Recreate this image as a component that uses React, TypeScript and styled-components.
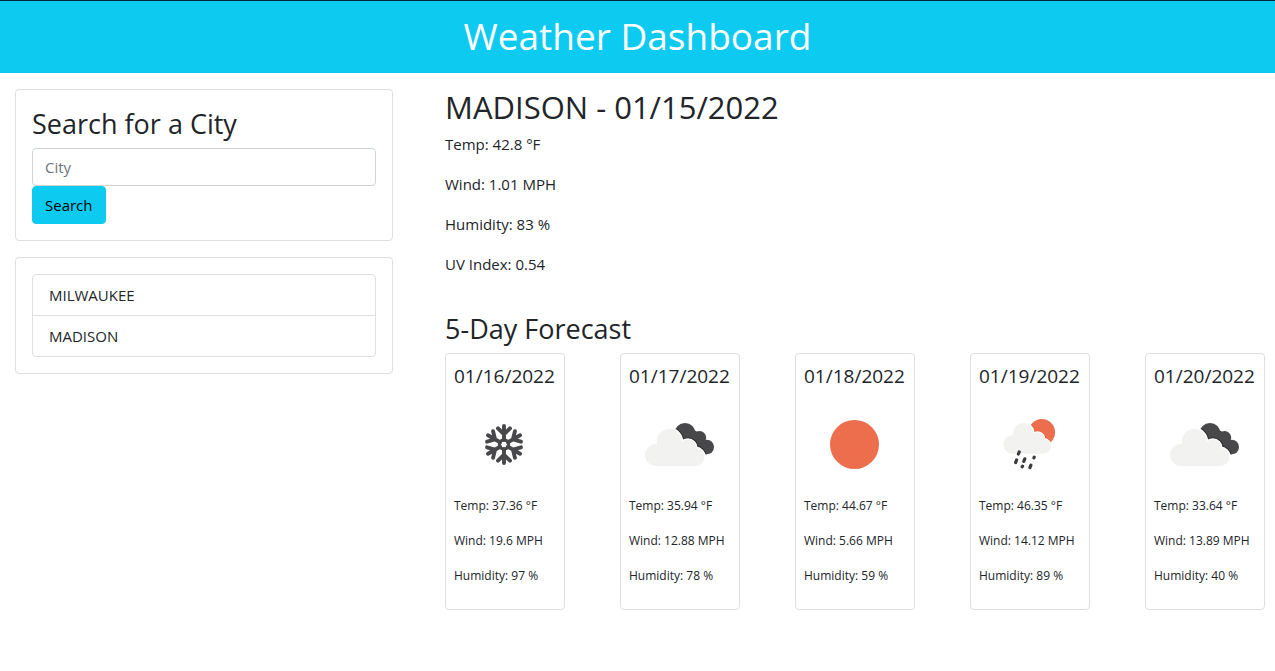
import React from "react";
import styled, { createGlobalStyle } from "styled-components";

const GlobalStyle = createGlobalStyle`
  *, *::before, *::after { box-sizing: border-box; }
  body {
    margin: 0;
    background: #fff;
    color: #212529;
    font-family: "Segoe UI", "Open Sans", "Noto Sans", sans-serif;
    font-size: 15px;
    line-height: 24px;
  }
  h1, h2, h3, h4, p, ul { margin: 0; padding: 0; font-weight: 400; }
`;

const Header = styled.header`
  padding: 11px 16px 13px;
  border-top: 1px solid #06263b;
  background: #0dcaf0;
  color: #fff;
  text-align: center;
`;

const Title = styled.h1`
  font-size: 37px;
  line-height: 48px;
`;

const Layout = styled.div`
  display: grid;
  grid-template-columns: 378fr 820fr;
  gap: 52px;
  align-items: start;
  padding: 16px 10px 16px 15px;
`;

const Sidebar = styled.aside`
  display: flex;
  flex-direction: column;
  gap: 16px;
`;

const Panel = styled.section`
  padding: 16px;
  border: 1px solid #dfdfdf;
  border-radius: 4px;
`;

const SectionTitle = styled.h3`
  margin-bottom: 6px;
  font-size: 27px;
  line-height: 36px;
`;

const SearchForm = styled.form`
  display: flex;
  flex-direction: column;
  align-items: flex-start;
`;

const SearchTitle = styled(SectionTitle).attrs({ as: "label" })``;

const CityInput = styled.input`
  width: 100%;
  height: 38px;
  padding: 6px 12px;
  border: 1px solid #ced4da;
  border-radius: 4px;
  background: #fff;
  color: #212529;
  font: inherit;
  &::placeholder { color: #6c757d; opacity: 1; }
`;

const SearchButton = styled.button`
  height: 38px;
  padding: 6px 12px;
  border: 1px solid #0dcaf0;
  border-radius: 4px;
  background: #0dcaf0;
  color: #000;
  font: inherit;
  cursor: pointer;
`;

const HistoryList = styled.ul`
  border: 1px solid #dfdfdf;
  border-radius: 4px;
  list-style: none;
`;

const HistoryItem = styled.li`
  padding: 8px 16px;
  & + & { border-top: 1px solid #dfdfdf; }
`;

const Current = styled.section`
  margin-bottom: 35px;
`;

const CityTitle = styled.h2`
  margin-bottom: 7px;
  font-size: 31px;
  line-height: 36px;
`;

const Reading = styled.p`
  & + & { margin-top: 16px; }
`;

const Forecast = styled.div`
  display: flex;
  justify-content: space-between;
`;

const DayCard = styled.article`
  width: 120px;
  padding: 8px;
  border: 1px solid #dfdfdf;
  border-radius: 4px;
`;

const DayTitle = styled.h4`
  margin-bottom: 4px;
  font-size: 19px;
  line-height: 28px;
  white-space: nowrap;
`;

const IconCanvas = styled.svg`
  display: block;
  width: 100px;
  height: 100px;
  margin-bottom: 2px;
`;

const DayReading = styled.p`
  margin-bottom: 16px;
  font-size: 12px;
  line-height: 19px;
  white-space: nowrap;
`;

type Sky = "snow" | "clouds" | "sun" | "rain";

const DARK = "#48484a";
const LIGHT = "#f2f2f0";
const ORANGE = "#ec6e4c";

function Snowflake() {
  return (
    <g fill="none" stroke={DARK} strokeWidth="3.9" strokeLinecap="round">
      {[0, 60, 120, 180, 240, 300].map((angle) => (
        <path
          key={angle}
          transform={`rotate(${angle} 50 50.5)`}
          d="M50 46V32M44 34.4L50 40.2L56 34.4"
        />
      ))}
      <circle cx="50" cy="50.5" r="4.6" strokeWidth="3.2" />
    </g>
  );
}

function CloudShape() {
  return (
    <>
      <circle cx="27" cy="61" r="11" />
      <circle cx="40.3" cy="47.5" r="12.5" />
      <circle cx="58.8" cy="54.2" r="8.6" />
      <circle cx="66.5" cy="63" r="9" />
      <path d="M27 72V58L40 48L59 54L66.5 72Z" />
    </>
  );
}

function DarkCloudShape() {
  return (
    <>
      <circle cx="56" cy="39.5" r="10.5" />
      <circle cx="70.6" cy="43.6" r="6.6" />
      <circle cx="77.7" cy="53" r="7.3" />
      <path d="M50 46L60 33L72 40L78 60.3H66Z" />
    </>
  );
}

function Clouds({ id }: { id: string }) {
  return (
    <>
      <clipPath id={id}>
        <DarkCloudShape />
      </clipPath>
      <g fill={DARK}><DarkCloudShape /></g>
      <g clipPath={`url(#${id})`}>
        <g fill="#29292b" stroke="#29292b" strokeWidth="4.4"><CloudShape /></g>
      </g>
      <g fill="#fff" stroke="#fff" strokeWidth="2.8"><CloudShape /></g>
      <g fill={LIGHT}><CloudShape /></g>
    </>
  );
}

function RainCloudShape() {
  return (
    <>
      <circle cx="33.5" cy="50.5" r="9.2" />
      <circle cx="44.3" cy="39.2" r="10.2" />
      <circle cx="58.5" cy="45.2" r="7" />
      <circle cx="64.7" cy="52.4" r="7.3" />
      <path d="M33.5 59.7V48L44 40L58 45L64.7 59.7Z" />
    </>
  );
}

function SunRain({ id }: { id: string }) {
  return (
    <>
      <clipPath id={id}>
        <circle cx="62.8" cy="38.3" r="13.3" />
      </clipPath>
      <circle cx="62.8" cy="38.3" r="13.3" fill={ORANGE} />
      <g clipPath={`url(#${id})`}>
        <g fill="#e05532" stroke="#e05532" strokeWidth="3"><RainCloudShape /></g>
      </g>
      <g fill="#fff" stroke="#fff" strokeWidth="2"><RainCloudShape /></g>
      <g fill={LIGHT}><RainCloudShape /></g>
      <path
        d="M40.2 58L39.4 60M37.6 66L36.6 68.6M45.8 64.8L44.8 67.4M55.2 63.1L54.9 63.8M43.5 72.2L43.2 72.8M51.9 71.2L50.9 73.6"
        fill="none"
        stroke="#3a3a3c"
        strokeWidth="3.2"
        strokeLinecap="round"
      />
    </>
  );
}

function SkyIcon({ sky, id }: { sky: Sky; id: string }) {
  return (
    <IconCanvas viewBox="0 0 100 100" role="img" aria-label={sky}>
      {sky === "snow" && <Snowflake />}
      {sky === "clouds" && <Clouds id={id} />}
      {sky === "sun" && <circle cx="50.5" cy="50.5" r="24.5" fill={ORANGE} />}
      {sky === "rain" && <SunRain id={id} />}
    </IconCanvas>
  );
}

const cities = ["MILWAUKEE", "MADISON"];

const readings = ["Temp: 42.8 °F", "Wind: 1.01 MPH", "Humidity: 83 %", "UV Index: 0.54"];

const days: { date: string; sky: Sky; temp: string; wind: string; humidity: string }[] = [
  { date: "01/16/2022", sky: "snow", temp: "37.36", wind: "19.6", humidity: "97" },
  { date: "01/17/2022", sky: "clouds", temp: "35.94", wind: "12.88", humidity: "78" },
  { date: "01/18/2022", sky: "sun", temp: "44.67", wind: "5.66", humidity: "59" },
  { date: "01/19/2022", sky: "rain", temp: "46.35", wind: "14.12", humidity: "89" },
  { date: "01/20/2022", sky: "clouds", temp: "33.64", wind: "13.89", humidity: "40" },
];

export default function App() {
  return (
    <>
      <GlobalStyle />
      <Header>
        <Title>Weather Dashboard</Title>
      </Header>
      <Layout>
        <Sidebar>
          <Panel>
            <SearchForm onSubmit={(event) => event.preventDefault()}>
              <SearchTitle htmlFor="city">Search for a City</SearchTitle>
              <CityInput id="city" type="text" placeholder="City" />
              <SearchButton type="submit">Search</SearchButton>
            </SearchForm>
          </Panel>
          <Panel>
            <HistoryList>
              {cities.map((city) => (
                <HistoryItem key={city}>{city}</HistoryItem>
              ))}
            </HistoryList>
          </Panel>
        </Sidebar>
        <main>
          <Current>
            <CityTitle>MADISON - 01/15/2022</CityTitle>
            {readings.map((reading) => (
              <Reading key={reading}>{reading}</Reading>
            ))}
          </Current>
          <SectionTitle>5-Day Forecast</SectionTitle>
          <Forecast>
            {days.map((day, index) => (
              <DayCard key={day.date}>
                <DayTitle>{day.date}</DayTitle>
                <SkyIcon sky={day.sky} id={`sky-${index}`} />
                <DayReading>Temp: {day.temp} °F</DayReading>
                <DayReading>Wind: {day.wind} MPH</DayReading>
                <DayReading>Humidity: {day.humidity} %</DayReading>
              </DayCard>
            ))}
          </Forecast>
        </main>
      </Layout>
    </>
  );
}
